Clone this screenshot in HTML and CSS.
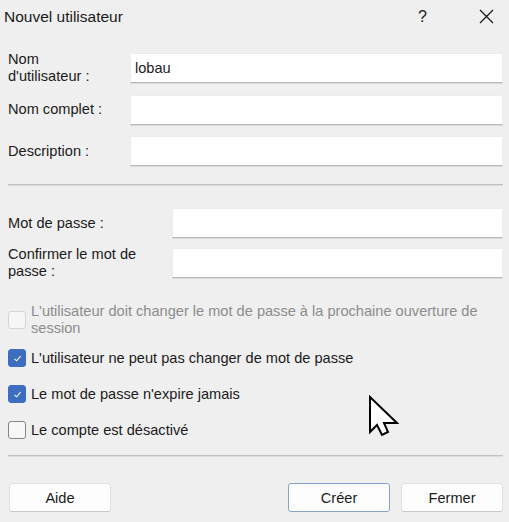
FILE: index.html
```html
<!DOCTYPE html>
<html lang="fr">
<head>
<meta charset="utf-8">
<title>Nouvel utilisateur</title>
<link rel="stylesheet" href="styles.css">
</head>
<body>
<div class="dialog">
  <div class="titlebar">
    <span class="title">Nouvel utilisateur</span>
    <span class="help">?</span>
    <span class="close"><svg width="15" height="15" viewBox="0 0 15 15"><path d="M1 1 L14 14 M14 1 L1 14" stroke="#1a1a1a" stroke-width="1.3" fill="none"/></svg></span>
  </div>
  <div class="form">
    <div class="grid grid-user">
      <label class="lbl">Nom<br>d'utilisateur :</label>
      <input class="field" type="text" value="lobau">
      <label class="lbl">Nom complet :</label>
      <input class="field" type="text" value="">
      <label class="lbl">Description :</label>
      <input class="field" type="text" value="">
    </div>
    <div class="sep sep-1"></div>
    <div class="grid grid-pass">
      <label class="lbl">Mot de passe :</label>
      <input class="field" type="password" value="">
      <label class="lbl">Confirmer le mot de<br>passe :</label>
      <input class="field" type="password" value="">
    </div>
    <div class="checks">
      <div class="check disabled row-1">
        <span class="box"></span>
        <span class="ctext">L'utilisateur doit changer le mot de passe à la prochaine ouverture de<br>session</span>
      </div>
      <div class="check row-2">
        <span class="box checked"><svg width="11" height="11" viewBox="0 0 11 11"><path d="M2.5 5.8 L4.6 7.8 L8.6 3.2" stroke="#fff" stroke-width="1.1" fill="none"/></svg></span>
        <span class="ctext">L'utilisateur ne peut pas changer de mot de passe</span>
      </div>
      <div class="check row-3">
        <span class="box checked"><svg width="11" height="11" viewBox="0 0 11 11"><path d="M2.5 5.8 L4.6 7.8 L8.6 3.2" stroke="#fff" stroke-width="1.1" fill="none"/></svg></span>
        <span class="ctext">Le mot de passe n'expire jamais</span>
      </div>
      <div class="check row-4">
        <span class="box"></span>
        <span class="ctext">Le compte est désactivé</span>
      </div>
    </div>
    <div class="sep sep-2"></div>
    <div class="buttons">
      <button class="btn">Aide</button>
      <span class="spacer"></span>
      <button class="btn default">Créer</button>
      <button class="btn">Fermer</button>
    </div>
  </div>
  <svg class="cursor" width="31" height="42" viewBox="-2 -2 31 42"><path d="M0 0 L0 35 L7 28 L12 38 L18 35 L14 26 L27 26 Z" fill="#fff" stroke="#000" stroke-width="2" stroke-linejoin="miter"/></svg>
</div>
</body>
</html>
```
FILE: styles.css
```css
* { box-sizing: border-box; }
html, body {
  margin: 0;
  padding: 0;
  background: #efefef;
}
body {
  font-family: "Liberation Sans", Arial, sans-serif;
  font-size: 14.6px;
  color: #1b1b1b;
}
.dialog {
  position: relative;
  width: 509px;
  height: 522px;
  overflow: hidden;
}
.titlebar {
  height: 32px;
  display: flex;
  align-items: center;
  padding-left: 4px;
}
.title {
  font-family: "Liberation Sans", Arial, sans-serif;
  font-size: 15.5px;
  color: #1a1a1a;
  flex: 1;
  margin-top: 1px;
}
.help {
  font-family: "Liberation Sans", Arial, sans-serif;
  font-size: 16px;
  color: #1a1a1a;
  width: 10px;
  margin-right: 51px;
  margin-top: 1px;
}
.close {
  width: 15px;
  height: 15px;
  margin-right: 15px;
  display: flex;
}
.form {
  padding: 21px 6px 0 8px;
}
.grid {
  display: grid;
  align-items: center;
}
.grid-user {
  grid-template-columns: 122px 1fr;
  grid-template-rows: 30px 30px 30px;
  row-gap: 11.5px;
}
.grid-pass {
  grid-template-columns: 164px 1fr;
  grid-template-rows: 30px 30px;
  row-gap: 10px;
  margin-top: 22px;
}
.lbl {
  line-height: 17px;
  color: #1b1b1b;
}
.field {
  height: 30px;
  width: 100%;
  border: 1px solid #ececec;
  border-bottom: 1px solid #b9b9b9;
  box-shadow: 0 1px 0 #dadada;
  background: #fff;
  font-family: "Liberation Sans", Arial, sans-serif;
  font-size: 14.6px;
  color: #1b1b1b;
  padding: 0 4px;
  outline: none;
  border-radius: 1px;
}
.sep {
  height: 2px;
  border-top: 1px solid #c2c2c2;
  border-bottom: 1px solid #dcdcdc;
}
.sep-1 { margin-top: 18px; }
.sep-2 { margin-top: 16px; }
.checks {
  margin-top: 25px;
  display: flex;
  flex-direction: column;
}
.check {
  display: flex;
  align-items: center;
  line-height: 17px;
}
.row-2 { margin-top: 12px; }
.row-3 { margin-top: 18px; }
.row-4 { margin-top: 18px; }
.box {
  width: 18px;
  height: 18px;
  border: 1px solid #858585;
  border-radius: 3px;
  background: #f7f7f7;
  margin-right: 5px;
  flex: none;
  display: flex;
  align-items: center;
  justify-content: center;
}
.box.checked {
  background: #3d6dbf;
  border-color: #3d6dbf;
}
.disabled .box {
  border-color: #d6d6d6;
  background: #f6f6f6;
}
.disabled .ctext {
  color: #8c8c8c;
}
.buttons {
  display: flex;
  align-items: center;
  margin-top: 26px;
  padding-left: 1px;
}
.spacer { flex: 1; }
.btn {
  width: 102px;
  height: 29px;
  background: #fdfdfd;
  border: 1px solid #dedede;
  border-bottom-color: #c8c8c8;
  border-radius: 3px;
  font-family: "Liberation Sans", Arial, sans-serif;
  font-size: 14.6px;
  color: #1b1b1b;
  padding: 0;
}
.btn.default {
  border-color: #86a4c8;
  margin-right: 11px;
}
.cursor {
  position: absolute;
  left: 368px;
  top: 395px;
}
```
